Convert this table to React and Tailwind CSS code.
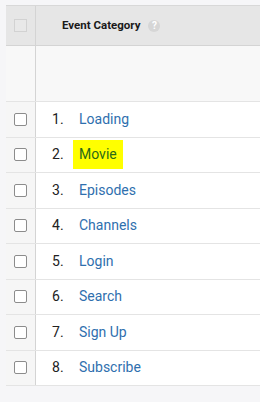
const rows = [
  'Loading',
  'Movie',
  'Episodes',
  'Channels',
  'Login',
  'Search',
  'Sign Up',
  'Subscribe',
];

function HelpIcon() {
  return (
    <span className="ml-[8px] flex h-[12px] w-[12px] items-center justify-center rounded-full bg-[#d6d6d6] text-[10px] font-bold leading-none text-white">
      ?
    </span>
  );
}

function Checkbox() {
  return <span className="block h-[13px] w-[13px] rounded-[2px] border-[1.5px] border-[#8c8c8c] bg-white" />;
}

export default function App() {
  return (
    <div
      className="h-[402px] w-[260px] overflow-hidden bg-[#f6f6f8] pl-[6px] pt-[5px]"
      style={{ fontFamily: 'Roboto, "Liberation Sans", sans-serif' }}
    >
      <div className="border-t border-[#d8d8d8]">
        <div className="flex h-[40px] border-b border-[#d4d4d4] bg-[#e6e6e6]">
          <div className="flex w-[30px] shrink-0 items-center justify-center border-r border-[#d4d4d4]">
            <span className="block h-[13px] w-[13px] border border-[#d2d2d2] bg-[#e8e8e8]" />
          </div>
          <div className="flex items-center pl-[26px] text-[11.5px] font-bold text-[#1a1a1a]">
            Event Category
            <HelpIcon />
          </div>
        </div>

        <div className="flex h-[56px] border-b border-[#e4e4e4] bg-[#f8f8f8]">
          <div className="w-[30px] shrink-0 border-r border-[#d4d4d4]" />
          <div className="flex-1" />
        </div>

        {rows.map((name, i) => (
          <div key={name} className="flex h-[35.5px] border-b border-[#e4e4e4] bg-white">
            <div className="flex w-[30px] shrink-0 items-center justify-center border-r border-[#d4d4d4] bg-[#f6f6f6]">
              <Checkbox />
            </div>
            <div className="flex items-center text-[14px]">
              <span className="w-[43px] pl-[16px] text-[#222]">{i + 1}.</span>
              <span
                className={
                  name === 'Movie'
                    ? 'ml-[-6px] bg-[#ffff00] px-[6px] py-[4px] text-[#2a6a17]'
                    : 'text-[#2f6fae]'
                }
              >
                {name}
              </span>
            </div>
          </div>
        ))}
      </div>
    </div>
  );
}
